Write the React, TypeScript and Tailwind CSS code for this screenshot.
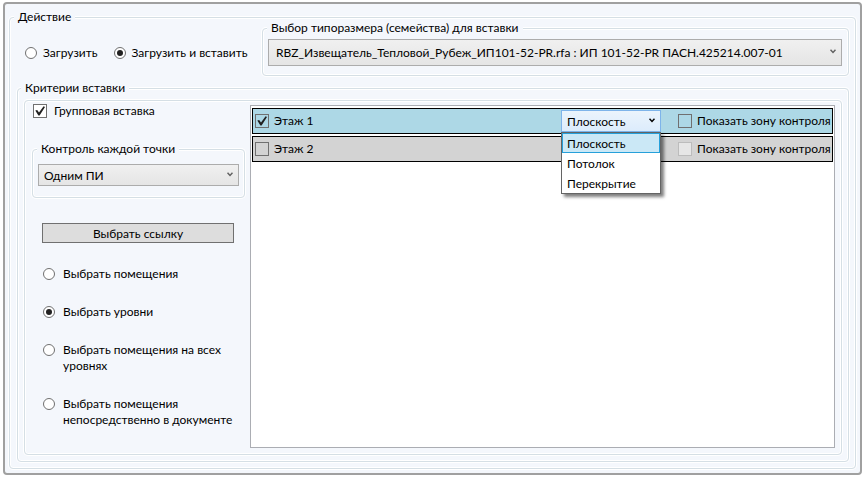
import { useState, type ReactNode } from "react";

const group =
  "min-w-0 rounded-[4px] border border-[#d5dfe5] shadow-[inset_0_0_0_1px_#fff,0_0_0_1px_#fff]";

function Legend({ children, className = "-ml-[3px]" }: { children: ReactNode; className?: string }) {
  return <legend className={`bg-[#f4f7fc] px-1 ${className}`}>{children}</legend>;
}

function Radio({
  name,
  label,
  checked = false,
  className = "gap-1.5",
}: {
  name: string;
  label: string;
  checked?: boolean;
  className?: string;
}) {
  return (
    <label className={`flex items-start ${className}`}>
      <span className="grid h-4 shrink-0 place-items-center">
        <input
          type="radio"
          name={name}
          defaultChecked={checked}
          className="peer col-start-1 row-start-1 size-3 appearance-none rounded-full border border-[#707070] bg-white"
        />
        <span className="pointer-events-none col-start-1 row-start-1 hidden size-1.5 rounded-full bg-[#212121] peer-checked:block" />
      </span>
      <span>{label}</span>
    </label>
  );
}

function Check({
  label,
  checked = false,
  disabled = false,
  box,
  className,
}: {
  label: string;
  checked?: boolean;
  disabled?: boolean;
  box: string;
  className: string;
}) {
  return (
    <label className={`flex items-center whitespace-nowrap ${className}`}>
      <span className="grid shrink-0 place-items-center">
        <input
          type="checkbox"
          defaultChecked={checked}
          disabled={disabled}
          className={`peer col-start-1 row-start-1 size-3.5 appearance-none border ${box}`}
        />
        <svg
          viewBox="0 0 14 14"
          className="pointer-events-none col-start-1 row-start-1 hidden size-3.5 peer-checked:block"
        >
          <path d="M2.3 6.6 L4.2 5.9 L6 8.6 L10.6 2.3 L12 2.9 L6.6 11.4 L5.4 11.4 Z" fill="#212121" />
        </svg>
      </span>
      <span>{label}</span>
    </label>
  );
}

function Chevron({ color, className }: { color: string; className: string }) {
  return (
    <svg viewBox="0 0 6 5" className={`pointer-events-none absolute h-[5px] w-1.5 ${className}`}>
      <path d="M0.5 0.8 L3 3.4 L5.5 0.8" fill="none" stroke={color} strokeWidth="1.5" />
    </svg>
  );
}

const surfaces = ["Плоскость", "Потолок", "Перекрытие"];

function SurfacePicker() {
  const [value, setValue] = useState(surfaces[0]);
  return (
    <div className="relative w-[100px]">
      <select
        aria-label="Поверхность"
        value={value}
        onChange={(e) => setValue(e.target.value)}
        className="block h-[22px] w-full appearance-none border border-[#7eb4ea] bg-linear-to-b from-[#ebf4fc] to-[#dcecfc] pt-0.5 pl-[5px]"
      >
        {surfaces.map((s) => (
          <option key={s}>{s}</option>
        ))}
      </select>
      <Chevron color="#000" className="top-2 right-1.5" />
      <ul
        role="listbox"
        aria-label="Поверхность"
        className="absolute top-full left-0 z-10 w-full border border-[#646464] bg-white shadow-[3px_3px_3px_#00000080]"
      >
        {surfaces.map((s) => (
          <li
            key={s}
            role="option"
            aria-selected={s === value}
            onClick={() => setValue(s)}
            className="flex h-5 items-center border border-transparent px-1 pt-0.5 aria-selected:border-[#26a0da] aria-selected:bg-[#cbe8f6]"
          >
            {s}
          </li>
        ))}
      </ul>
    </div>
  );
}

const comboBox =
  "block w-full appearance-none border border-[#acacac] bg-linear-to-b from-[#f0f0f0] to-[#e5e5e5]";

export default function App() {
  return (
    <div className="bg-white px-[3px] pt-0.5 font-[Lato,'Noto_Sans',sans-serif] text-[12px] leading-4 text-black">
      <main className="rounded-[4px] border-2 border-[#a0a0a0] bg-[#f4f7fc] px-1 pt-[5px] pb-1">
        <fieldset className={`${group} pr-1.5 pb-1.5 pl-[7px]`}>
          <Legend>Действие</Legend>

          <div className="-mt-[5px] flex">
            <div className="flex w-[245px] shrink-0 gap-4 pt-[25px] pl-2 whitespace-nowrap">
              <Radio name="action" label="Загрузить" />
              <Radio name="action" label="Загрузить и вставить" checked />
            </div>
            <fieldset className={`${group} flex-1 pr-1.5 pb-[9px] pl-[5px]`}>
              <Legend className="-ml-px">Выбор типоразмера (семейства) для вставки</Legend>
              <div className="relative pt-[3px]">
                <select aria-label="Типоразмер" className={`${comboBox} h-[27px] pl-[7px]`}>
                  <option>RBZ_Извещатель_Тепловой_Рубеж_ИП101-52-PR.rfa : ИП 101-52-PR ПАСН.425214.007-01</option>
                </select>
                <Chevron color="#606060" className="top-[13px] right-1.5" />
              </div>
            </fieldset>
          </div>

          <fieldset className={`${group} mt-1 px-1.5 pb-1.5`}>
            <Legend>Критерии вставки</Legend>

            <div className={`${group} mt-1 grid grid-cols-[225px_1fr] pr-1.5`}>
              <div className="pt-0.5 pr-[5px] pb-[26px] pl-[7px]">
                <Check
                  label="Групповая вставка"
                  checked
                  box="border-[#707070] bg-white"
                  className="gap-[7px] pl-px"
                />

                <fieldset className={`${group} mt-[22px] px-[5px] pb-[11px]`}>
                  <Legend className="-ml-px">Контроль каждой точки</Legend>
                  <div className="relative pt-[7px]">
                    <select aria-label="Контроль каждой точки" className={`${comboBox} h-[22px] pt-0.5 pl-[5px]`}>
                      <option>Одним ПИ</option>
                      <option>Двумя ПИ</option>
                    </select>
                    <Chevron color="#606060" className="top-[15px] right-1.5" />
                  </div>
                </fieldset>

                <div className="pt-[25px] pl-[10px]">
                  <div className="pr-[11px]">
                    <button type="button" className="block h-5 w-full border border-[#707070] bg-[#dddddd] pt-0.5">
                      Выбрать ссылку
                    </button>
                  </div>
                  <div className="mt-[23px] flex flex-col gap-[22px] pl-px">
                    <Radio name="scope" label="Выбрать помещения" className="gap-2" />
                    <Radio name="scope" label="Выбрать уровни" checked className="gap-2" />
                    <Radio name="scope" label="Выбрать помещения на всех уровнях" className="gap-2" />
                    <Radio name="scope" label="Выбрать помещения непосредственно в документе" className="gap-2" />
                  </div>
                </div>
              </div>

              <ul className="mt-1 mb-1.5 flex flex-col gap-0.5 border border-[#abadb3] bg-white px-px py-0.5">
                <li className="flex h-[26px] items-center border border-black bg-[#add8e6] pl-0.5">
                  <Check label="Этаж 1" checked box="border-[#707070]" className="mr-auto gap-[5px]" />
                  <SurfacePicker />
                  <Check
                    label="Показать зону контроля"
                    box="border-[#707070]"
                    className="ml-[17px] w-[154px] gap-[5px]"
                  />
                </li>
                <li className="flex h-[26px] items-center border border-black bg-[#d3d3d3] pl-0.5">
                  <Check label="Этаж 2" box="border-[#707070]" className="mr-auto gap-[5px]" />
                  <Check
                    label="Показать зону контроля"
                    disabled
                    box="border-[#bcbcbc] bg-[#e6e6e6]"
                    className="w-[154px] gap-[5px]"
                  />
                </li>
              </ul>
            </div>
          </fieldset>
        </fieldset>
      </main>
    </div>
  );
}
